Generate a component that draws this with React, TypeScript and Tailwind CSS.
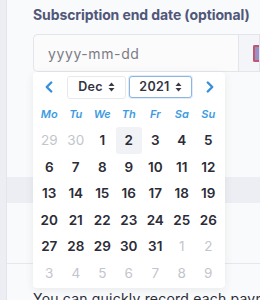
import { ChevronLeft, ChevronRight } from "lucide-react";

const weekdays = ["Mo", "Tu", "We", "Th", "Fr", "Sa", "Su"];

const days = [
  [29, 30, 1, 2, 3, 4, 5],
  [6, 7, 8, 9, 10, 11, 12],
  [13, 14, 15, 16, 17, 18, 19],
  [20, 21, 22, 23, 24, 25, 26],
  [27, 28, 29, 30, 31, 1, 2],
  [3, 4, 5, 6, 7, 8, 9],
];

function isOtherMonth(row: number, day: number) {
  return (row === 0 && day > 20) || (row >= 4 && day < 10);
}

function SortArrows() {
  return (
    <svg width="7" height="10" viewBox="0 0 7 10" className="ml-[5px]">
      <path d="M3.5 0.5 L6.5 4 H0.5 Z" fill="#3a3a44" />
      <path d="M3.5 9.5 L6.5 6 H0.5 Z" fill="#3a3a44" />
    </svg>
  );
}

function DatePopup() {
  return (
    <div className="absolute left-[33px] top-[72px] w-[192px] rounded-[4px] bg-white shadow-[0_2px_8px_rgba(40,45,70,0.08)]">
      <div className="flex h-[30px] items-center">
        <ChevronLeft className="ml-[7px] h-[18px] w-[18px] text-[#3a8fd9]" strokeWidth={3.2} />
        <div className="ml-[9px] flex h-[23px] w-[59px] items-center justify-center rounded-[3px] border border-[#e8e9ee] bg-white text-[12.5px] font-semibold tracking-[0.3px] text-[#33343f]">
          Dec
          <SortArrows />
        </div>
        <div className="ml-[3px] flex h-[22px] w-[63px] items-center justify-center rounded-[3px] border border-[#8fb4e0] bg-white text-[12.5px] font-semibold tracking-[0.3px] text-[#33343f] shadow-[0_0_0_1px_rgba(140,180,225,0.25)]">
          2021
          <SortArrows />
        </div>
        <ChevronRight className="ml-[9px] h-[18px] w-[18px] text-[#3a8fd9]" strokeWidth={3.2} />
      </div>
      <div className="grid h-[25px] grid-cols-[repeat(7,26.5px)] items-center px-[3px]">
        {weekdays.map((w) => (
          <span key={w} className="text-center text-[11px] font-semibold italic text-[#3d9be2]">
            {w}
          </span>
        ))}
      </div>
      <div className="grid grid-cols-[repeat(7,26.5px)] auto-rows-[26.5px] px-[3px] pb-[2px]">
        {days.map((week, r) =>
          week.map((d, c) => {
            const muted = isOtherMonth(r, d);
            const today = r === 0 && d === 2;
            return (
              <span
                key={`${r}-${c}`}
                className={
                  "flex items-center justify-center rounded-[3px] text-[13.5px] " +
                  (muted ? "font-normal text-[#c3c5cc]" : "font-semibold text-[#2b2c37]") +
                  (today ? " bg-[#f1f2f5]" : "")
                }
              >
                {d}
              </span>
            );
          })
        )}
      </div>
    </div>
  );
}

export default function App() {
  return (
    <div
      className="relative flex h-[300px] w-[260px] overflow-hidden bg-[#eceef3]"
      style={{ fontFamily: "Inter, 'Noto Sans', sans-serif" }}
    >
      <div className="w-[7px] shrink-0 border-r border-[#e3e5ec] bg-[#eceef3]" />
      <div className="flex min-w-0 flex-1 flex-col">
        <div className="h-[177px] shrink-0 bg-[#f9fafb] pl-[26px] pt-[4px]">
          <p className="whitespace-nowrap text-[14px] font-bold tracking-[-0.1px] text-[#505779]">
            Subscription end date (optional)
          </p>
          <div className="mt-[9px] flex h-[38px]">
            <div className="flex w-[208px] items-center rounded-l-[5px] border border-r-0 border-[#e3e5ea] bg-[#fbfbfc] pl-[14px] text-[14px] tracking-[0.6px] text-[#7a7b85]">
              yyyy-mm-dd
            </div>
            <div className="flex flex-1 items-center border border-[#e3e5ea] bg-[#f4f5f8] pl-[14px]">
              <div className="h-[17px] w-[6px] rounded-l-[2px] border-[2px] border-r-0 border-[#c0566f] bg-[#9b8fc8]" />
            </div>
          </div>
        </div>
        <div className="h-[26px] shrink-0" />
        <div className="min-h-0 flex-1 overflow-hidden bg-[#f9fafb]">
          <div className="h-[61px] border-b border-[#e6e7ec]" />
          <p className="whitespace-nowrap pl-[26px] pt-[24px] text-[14px] tracking-[0.2px] text-[#2b2c37]">
            You can quickly record each payment
          </p>
        </div>
      </div>
      <DatePopup />
    </div>
  );
}
